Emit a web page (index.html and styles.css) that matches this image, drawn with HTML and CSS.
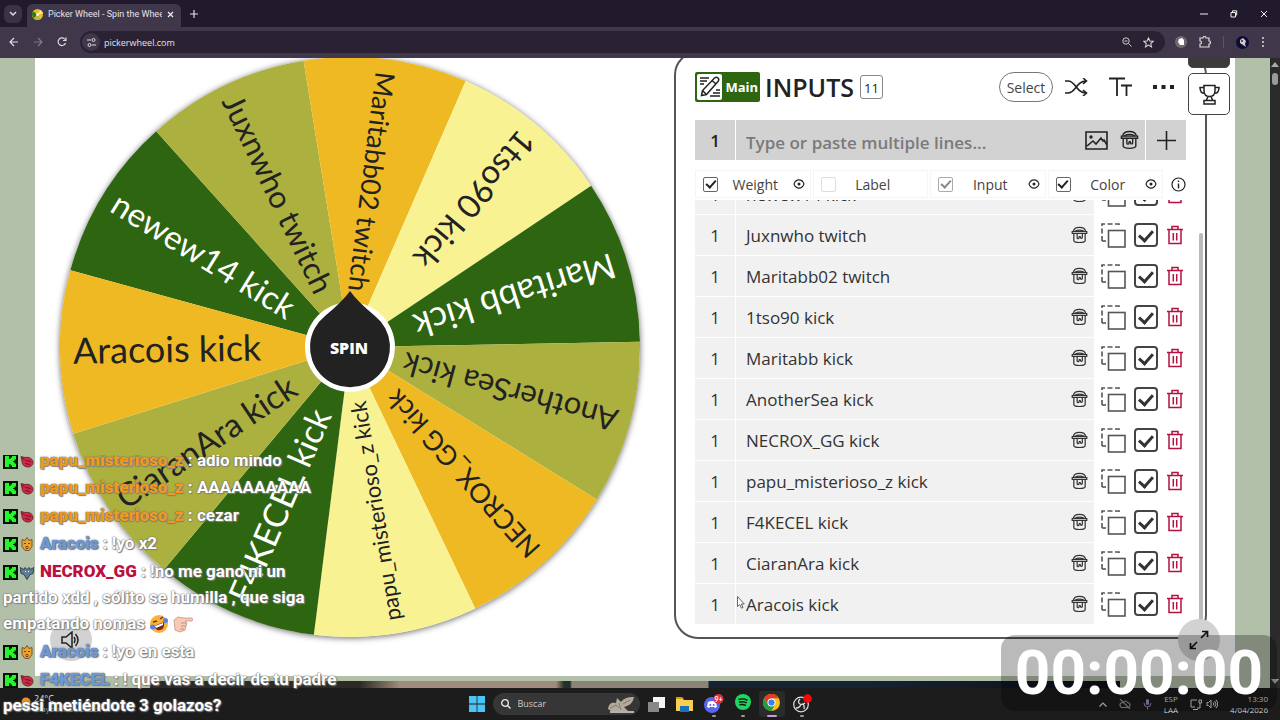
FILE: index.html
```
<!DOCTYPE html>
<html lang="es">
<head>
<meta charset="utf-8">
<title>Picker Wheel - Spin the Wheel</title>
<link rel="stylesheet" href="styles.css">
</head>
<body>
<svg class="defs" aria-hidden="true">
  <symbol id="bucket" viewBox="0 0 18 19">
    <g fill="none" stroke="currentColor" stroke-width="1.3">
      <path d="M2.500 5.500C3.500 0 14.500 0 15.500 5.500"/>
      <path d="M4 5.500q5-2.500 10 0"/>
      <path d="M1.300 5.800h15.400v2H1.300z"/>
      <path d="M3 8v7.500c1 2.600 11 2.600 12 0V8"/>
      <path d="M6.500 8v4.500c0 1.300 2 1.300 2 0v-1M8.500 12c0-1.500 1.500-1.500 1.500 0 0 1.500 2 1.500 2 0V8"/>
    </g>
  </symbol>
  <symbol id="copy" viewBox="0 0 25 25">
    <g fill="none" stroke="#555" stroke-width="1.6">
      <rect x="7.500" y="7.500" width="16.500" height="16.500"/>
      <path d="M1 18V1h17v3" stroke-dasharray="5 2.500"/>
      <path d="M1 18h4"/>
    </g>
  </symbol>
  <symbol id="trash" viewBox="0 0 18 20">
    <g fill="none" stroke="#b3123f" stroke-width="1.500">
      <path d="M1 4.500h16M6 4V1.500h6V4M3 5v13.500h12V5M7.300 8v7.500M10.700 8v7.500"/>
    </g>
  </symbol>
  <symbol id="eye" viewBox="0 0 12 10">
    <path d="M1 5c2-5.500 8-5.500 10 0c-2 5.500-8 5.500-10 0z" fill="none" stroke="#222" stroke-width="1.100"/>
    <circle cx="6" cy="5" r="1.500" fill="#222"/>
  </symbol>
  <symbol id="kick" viewBox="0 0 15 15">
    <rect width="15" height="15" fill="#001800"/>
    <path d="M2 2h4v3h1.500V3.500H9V2h4v3.500h-1.500V7H10v1h1.500v1.500H13V13H9v-1.500H7.500V10H6v3H2z" fill="#25f52a"/>
  </symbol>
  <symbol id="berry" viewBox="0 0 14 14">
    <path d="M1 2l4 1c5-1 8 2 8 5s-3 5-6 4.500S2 10 2 7z" fill="#cf2946" stroke="#542029" stroke-width=".8"/>
    <path d="M6 6l5 1M5 9l5 1M2 3l3 3" stroke="#6f1026" fill="none"/>
  </symbol>
  <symbol id="lion" viewBox="0 0 14 14">
    <path d="M2 2l3 1 2-3 2 3 3-1v7l-3 4H5L2 9z" fill="#e8a42e" stroke="#7b5523"/>
    <path d="M4 6h2M8 6h2M6 9h2v2H6z" stroke="#76401d" fill="#fff0b0"/>
  </symbol>
  <symbol id="bat" viewBox="0 0 14 14">
    <path d="M0 2l4 2 1-2 2 2 2-2 1 2 4-2-1 6-3 1-3 5-3-5-3-1z" fill="#5c7f96" stroke="#2f4450"/>
    <path d="M5 6h1M8 6h1" stroke="#fff"/>
  </symbol>
</svg>

<div class="screen">
<header class="browser">
  <div class="tabs">
    <button class="tab-list" aria-label="Buscar pestañas"><svg width="8" height="6" viewBox="0 0 8 6"><path d="M1 1l3 3 3-3" fill="none" stroke="#ddd" stroke-width="1.500"/></svg></button>
    <div class="tab">
      <svg width="11" height="11" viewBox="0 0 12 12"><circle cx="6" cy="6" r="6" fill="#edbb29"/><path d="M6 6L1 2.500A6 6 0 0 0 2 10z" fill="#2f7a1a"/><path d="M6 6L3 11a6 6 0 0 0 6-.5z" fill="#a9c03c"/><path d="M6 6L12 5a6 6 0 0 0-3-4z" fill="#f8f08a"/><circle cx="6" cy="6" r="1.500" fill="#fff"/></svg>
      <span class="tab-title">Picker Wheel - Spin the Wheel</span>
      <button class="plain" aria-label="Cerrar pestaña"><svg width="7" height="7" viewBox="0 0 7 7"><path d="M1 1l5 5M6 1L1 6" stroke="#eee" stroke-width="1.200"/></svg></button>
    </div>
    <button class="plain new-tab" aria-label="Nueva pestaña"><svg width="8" height="8" viewBox="0 0 8 8"><path d="M4 0v8M0 4h8" stroke="#ddd" stroke-width="1.200"/></svg></button>
    <div class="window-buttons">
      <button class="plain" aria-label="Minimizar"><svg width="8" height="8" viewBox="0 0 8 8"><path d="M0 4h8" stroke="#eee"/></svg></button>
      <button class="plain" aria-label="Restaurar"><svg width="8" height="8" viewBox="0 0 8 8"><path d="M1 2.500h4.500v4.500H1zM2.500 2V.8h4.200V5H6" fill="none" stroke="#eee"/></svg></button>
      <button class="plain" aria-label="Cerrar"><svg width="8" height="8" viewBox="0 0 8 8"><path d="M1 1l6 6M7 1L1 7" stroke="#eee"/></svg></button>
    </div>
  </div>
  <div class="toolbar">
    <button class="plain" aria-label="Atrás"><svg width="10" height="10" viewBox="0 0 10 10"><path d="M9 5H1M5 1L1 5l4 4" fill="none" stroke="#ddd" stroke-width="1.200"/></svg></button>
    <button class="plain" aria-label="Adelante"><svg width="10" height="10" viewBox="0 0 10 10"><path d="M1 5h8M5 1l4 4-4 4" fill="none" stroke="#81798b" stroke-width="1.200"/></svg></button>
    <button class="plain" aria-label="Recargar"><svg width="10" height="10" viewBox="0 0 10 10"><path d="M8.500 6A3.800 3.800 0 1 1 8 2.500M9 .5v3H6" fill="none" stroke="#ddd" stroke-width="1.200"/></svg></button>
    <div class="address">
      <span class="site-info"><svg width="9" height="9" viewBox="0 0 9 9"><g fill="none" stroke="#ddd"><path d="M0 2h4M5 7h4"/><circle cx="6.500" cy="2" r="1.500"/><circle cx="2.500" cy="7" r="1.500"/></g></svg></span>
      <input class="url" type="text" value="pickerwheel.com" aria-label="Dirección">
      <button class="plain" aria-label="Zoom"><svg width="10" height="10" viewBox="0 0 10 10"><path d="M6.500 6.500L9.500 9.500M2.500 4h3" stroke="#ccc"/><circle cx="4" cy="4" r="3.200" fill="none" stroke="#ccc"/></svg></button>
      <button class="plain" aria-label="Favorito"><svg width="11" height="11" viewBox="0 0 12 12"><path d="M6 1l1.500 3.400 3.700.3-2.800 2.400.9 3.700L6 8.900l-3.300 1.900.9-3.700L.8 4.700l3.700-.3z" fill="none" stroke="#ddd" stroke-width="1.100"/></svg></button>
    </div>
    <div class="extensions">
      <svg width="12" height="12" viewBox="0 0 12 12"><circle cx="6" cy="6" r="6" fill="#706a70"/><path d="M4 3l3-1 2 2v5H5L3 6z" fill="#fff"/></svg>
      <svg width="12" height="12" viewBox="0 0 12 12"><path d="M1 2h3a1.500 1.500 0 0 1 3 0h3v3a1.500 1.500 0 0 1 0 3v3H1V8a1.500 1.500 0 0 0 0-3z" fill="none" stroke="#ddd" stroke-width="1.200"/></svg>
      <span class="bar"></span>
      <svg width="13" height="13" viewBox="0 0 13 13"><circle cx="6.500" cy="6.500" r="6.500" fill="#0d0b38"/><path d="M4 4l3-2 3 3-1 3 1 3-3-2-3-2z" fill="#d8c8c8"/><circle cx="6" cy="5" r="1" fill="#333"/></svg>
      <svg width="4" height="12" viewBox="0 0 4 12" fill="#ddd"><circle cx="2" cy="2" r="1"/><circle cx="2" cy="6" r="1"/><circle cx="2" cy="10" r="1"/></svg>
    </div>
  </div>
</header>

<div class="viewport">
  <div class="page">
    <main class="sheet">
      <section class="wheel-area" aria-label="Ruleta">
        <svg class="wheel" id="wheel" viewBox="-315 -289 639 618">
          <circle class="rim" r="290"/>
          <g id="slices"></g>
          <circle r="45" fill="#fff"/>
          <path d="M0-56Q7-46 25-31A40 40 0 1 1-25-31Q-7-46 0-56Z" fill="#222"/>
          <text class="spin" x="-1" y="7" text-anchor="middle">SPIN</text>
        </svg>
        <button class="round sound" aria-label="Sonido"><svg width="20" height="18" viewBox="0 0 20 18"><path d="M1 6h4l6-5v16l-6-5H1zM13 6q2 3 0 6M14.500 3q5 6 0 12" fill="none" stroke="#222" stroke-width="1.500"/></svg></button>
      </section>

      <section class="panel">
        <div class="panel-head">
          <span class="main-badge"><span class="main-icon"><svg width="22" height="22" viewBox="0 0 22 22"><g fill="none" stroke="#222" stroke-width="1.500"><path d="M2.500 19.500l1-5L15.500 2q2-1.500 3.500 0t0 3.500L7.500 18.500zM13 4.500l4 3.500M3.500 14.500l4 4"/><path d="M1 2h9M1 5h7M1 8h4M17 14h4M14 17h7M11 20h10"/></g></svg></span>Main</span>
          <h1>INPUTS</h1>
          <span class="count">11</span>
          <button class="select">Select</button>
          <button class="plain" aria-label="Mezclar"><svg width="23" height="18" viewBox="0 0 23 18"><path d="M0 3h3C11 3 11 15 21 15M0 15h3C11 15 11 3 21 3M18 0l3.500 3L18 6M18 12l3.500 3-3.500 3" fill="none" stroke="#222" stroke-width="1.600"/></svg></button>
          <button class="plain" aria-label="Tamaño de texto"><svg width="23" height="20" viewBox="0 0 23 20"><path d="M0 1.500h16M8 1.500V19M12 8.500h11M17.500 8.500V19" fill="none" stroke="#222" stroke-width="1.800"/></svg></button>
          <button class="plain" aria-label="Más"><svg width="21" height="4" viewBox="0 0 21 4" fill="#222"><path d="M0 0h4v4H0zM8.500 0h4v4h-4zM17 0h4v4h-4z"/></svg></button>
        </div>

        <form class="add-row">
          <span class="add-weight">1</span>
          <label class="add-field">
            <input type="text" placeholder="Type or paste multiple lines..." aria-label="Nueva entrada">
            <svg width="23" height="19" viewBox="0 0 23 19"><g fill="none" stroke="#222" stroke-width="1.600"><path d="M1 1h21v17H1zM2 15l6-5 3 3 5-6 2 3 1-1 3 5"/></g><circle cx="6" cy="6" r="1.700" fill="#222"/></svg>
            <svg width="19" height="20"><use href="#bucket"/></svg>
          </label>
          <button class="add" type="button" aria-label="Agregar"><svg width="19" height="19" viewBox="0 0 19 19"><path d="M9.500 0v19M0 9.500h19" stroke="#222" stroke-width="1.600"/></svg></button>
        </form>

        <div class="columns">
          <label class="col"><input type="checkbox" checked><span>Weight</span><svg width="12" height="10"><use href="#eye"/></svg></label>
          <label class="col faint"><input type="checkbox"><span>Label</span><i></i></label>
          <label class="col pale"><input type="checkbox" checked><span>Input</span><svg width="12" height="10"><use href="#eye"/></svg></label>
          <label class="col"><input type="checkbox" checked><span>Color</span><svg width="12" height="10"><use href="#eye"/></svg></label>
          <svg class="info" width="15" height="15" viewBox="0 0 15 15"><circle cx="7.500" cy="7.500" r="6.500" fill="none" stroke="#222" stroke-width="1.200"/><path d="M7.500 6.500v5M7.500 3.500v1.500" stroke="#222" stroke-width="1.400"/></svg>
        </div>

        <div class="list-wrap">
          <ul class="list" id="entries"></ul>
          <span class="list-scroll"></span>
        </div>
      </section>

      <div class="side-tools">
        <button class="tool dark" aria-label="Entradas"></button>
        <button class="tool" aria-label="Resultados"><svg width="21" height="21" viewBox="0 0 21 21"><path d="M5 1.500h11v5c0 4-2 6-5.500 6S5 10.500 5 6.500zM5 3.500H1c0 4 2 6 5 6M16 3.500h4c0 4-2 6-5 6M9 12.500l-2 4.500M12 12.500l2 4.500M5 16.500h11v3.500H5z" fill="none" stroke="#222" stroke-width="1.500"/></svg></button>
      </div>
      <button class="round expand" aria-label="Pantalla completa"><svg width="20" height="20" viewBox="0 0 20 20"><path d="M12 8l6-6M13 1.500h5.500V7M8 12l-6 6M1.500 13v5.500H7" fill="none" stroke="#111" stroke-width="1.700"/></svg></button>
      <svg class="pointer" width="8" height="13" viewBox="0 0 8 13"><path d="M.5.5v10l2.300-2 1.700 3.700 1.500-.7-1.700-3.500h3z" fill="#fff" stroke="#444" stroke-width=".8"/></svg>
    </main>
    <div class="advert"></div>
  </div>
  <div class="scrollbar"><svg width="8" height="6" viewBox="0 0 8 6"><path d="M4 0l4 5H0z" fill="#aaa"/></svg><span class="thumb"></span><svg class="down" width="8" height="6" viewBox="0 0 8 6"><path d="M4 6L0 1h8z" fill="#aaa"/></svg></div>
</div>

<footer class="taskbar">
  <div class="weather">
    <svg width="16" height="14" viewBox="0 0 16 14"><circle cx="10" cy="5" r="4.500" fill="#e8932f"/><rect x="0" y="7" width="14" height="6" rx="3" fill="#a8b8c8"/></svg>
    <span>24°C<br><small>Mayorm. soleado</small></span>
  </div>
  <div class="apps">
    <svg width="16" height="16" viewBox="0 0 16 16" fill="#4cc4f5"><path d="M0 0h7.600v7.600H0zM8.400 0H16v7.600H8.400zM0 8.400h7.600V16H0zM8.400 8.400H16V16H8.400z"/></svg>
    <label class="search">
      <svg width="10" height="10" viewBox="0 0 10 10"><path d="M6.500 6.500l3 3" stroke="#eee" stroke-width="1.300"/><circle cx="4" cy="4" r="3.300" fill="none" stroke="#eee" stroke-width="1.300"/></svg>
      <input type="text" placeholder="Buscar" aria-label="Buscar">
      <svg width="28" height="17" viewBox="0 0 28 17"><path d="M1 13C2 7 5 6 9 7L10 2l4 4c3-4 7-5 13-5-1 6-5 9-10 10l4 4H4z" fill="#b3aa9b"/><path d="M3 12l6-3 3 3M16 8l7-4M12 7l2 7" stroke="#82796c" fill="none"/><path d="M3 16h24" stroke="#ddd" stroke-width="1.500"/></svg>
    </label>
    <svg width="17" height="15" viewBox="0 0 17 15"><path d="M5 0h12v11H5z" fill="#f4f4f4"/><path d="M0 5h11v10H0z" fill="#888"/></svg>
    <svg width="17" height="15" viewBox="0 0 17 15"><path d="M0 1h6l2 2h9v11H0z" fill="#f7cf52"/><path d="M0 0h6l2 2H0z" fill="#d99720"/><path d="M4 9h9v6H4z" fill="#1672bb"/></svg>
    <span class="app"><svg width="20" height="20" viewBox="0 0 20 20"><circle cx="8" cy="11" r="8" fill="#5865f2"/><path d="M4 8q4-2 8 0l1 5-2 1-1-1H6l-1 1-2-1z" fill="#fff"/><circle cx="6.300" cy="11" r="1" fill="#5865f2"/><circle cx="9.700" cy="11" r="1" fill="#5865f2"/><circle cx="14.500" cy="5" r="5" fill="#d9333f"/><text x="14.500" y="8" text-anchor="middle" class="badge-text">9+</text></svg></span>
    <span class="app"><svg width="16" height="16" viewBox="0 0 16 16"><circle cx="8" cy="8" r="8" fill="#1ed760"/><path d="M3.500 5.500q5-1.500 9 .8M4 8.200q4.500-1.200 7.800.8M4.500 10.700q3.500-.8 6.500.8" fill="none" stroke="#111" stroke-width="1.400"/></svg></span>
    <span class="app active"><svg width="17" height="17" viewBox="0 0 17 17"><circle cx="8.500" cy="8.500" r="8.500" fill="#fbc116"/><path d="M1.100 4.300A8.500 8.500 0 0 1 15.900 4.300H8.500L5 10.500z" fill="#e33b2e"/><path d="M1.100 4.300A8.500 8.500 0 0 0 8.500 17L12 10.500 5 10.500z" fill="#229a4c"/><circle cx="8.500" cy="8.500" r="4" fill="#fff"/><circle cx="8.500" cy="8.500" r="3.100" fill="#3d7ff0"/></svg></span>
    <span class="app"><svg width="19" height="19" viewBox="0 0 19 19"><circle cx="8" cy="10.500" r="7.300" fill="#222" stroke="#ddd" stroke-width="1.200"/><path d="M7 5q-3 3 0 5q3 1 5-1M8 10q-1 4-5 4M9 10q3 1 2 5" fill="none" stroke="#ddd" stroke-width="1.300"/><circle cx="14.500" cy="4.500" r="4.300" fill="#f00a0a"/></svg></span>
  </div>
  <div class="tray">
    <svg width="8" height="5" viewBox="0 0 8 5"><path d="M.5 4.500L4 1l3.500 3.500" fill="none" stroke="#ddd" stroke-width="1.200"/></svg>
    <svg width="12" height="10" viewBox="0 0 12 10"><path d="M3 8.500h6q2.500-.5 2-3-.5-2-2.500-2-2-3-4.500 0Q.5 4 1 6.500q.5 2 2 2M1 0l10 10" fill="none" stroke="#999" stroke-width="1.100"/></svg>
    <svg width="9" height="12" viewBox="0 0 9 12"><rect x="3" y="1" width="3" height="6" rx="1.500" fill="#a58ac0"/><path d="M1 5q0 4 3.500 4T8 5M4.500 9v2.500" fill="none" stroke="#a58ac0"/></svg>
    <span class="lang">ESP<br>LAA</span>
    <span class="status">
      <svg width="12" height="11" viewBox="0 0 12 11"><path d="M7 1H1v7h4M3 10.500h5M9 1h2.500v3H9zM10 4v5H7" fill="none" stroke="#ddd"/></svg>
      <svg width="12" height="10" viewBox="0 0 12 10"><path d="M1 3.500h1.500L5 1v8L2.500 6.500H1zM7 3.500q1.500 1.500 0 3M8.500 2q3 3 0 6M10 .8q3.500 4.200 0 8.400" fill="none" stroke="#ddd"/></svg>
    </span>
    <span class="clock">13:30<br>4/04/2026</span>
  </div>
</footer>

<aside class="chat" aria-label="Chat">
  <p><svg><use href="#kick"/></svg><svg><use href="#berry"/></svg><b class="orange">papu_misterioso_z</b> : adio mindo</p>
  <p><svg><use href="#kick"/></svg><svg><use href="#berry"/></svg><b class="orange">papu_misterioso_z</b> : AAAAAAAAAA</p>
  <p><svg><use href="#kick"/></svg><svg><use href="#berry"/></svg><b class="orange">papu_misterioso_z</b> : cezar</p>
  <p><svg><use href="#kick"/></svg><svg><use href="#lion"/></svg><b class="blue">Aracois</b> : !yo x2</p>
  <p><svg><use href="#kick"/></svg><svg><use href="#bat"/></svg><b class="red">NECROX_GG</b> : !no me gano ni un partido xdd , sólito se humilla , que siga empatando nomas
    <svg class="emoji" viewBox="0 0 20 20"><circle cx="10" cy="10" r="9" fill="#f9b233"/><path d="M5 12l10-4q1 7-4 8-4 1-6-4z" fill="#7c2434"/><path d="M6 12l8-3v2l-7 3z" fill="#fff"/><path d="M4 8l4-1M11 5l3-2" stroke="#633" stroke-width="1.500"/><circle cx="3.500" cy="13" r="2.500" fill="#5d7ee8"/><circle cx="16.500" cy="6.500" r="2.500" fill="#5d7ee8"/></svg>
    <svg class="emoji" viewBox="0 0 20 20"><path d="M1 6l4-3 6 1h8q1.500 1.500 0 3h-7l2 2-1 3-1 4-5 2-5-2z" fill="#f5cbb8" stroke="#c98f7c" stroke-width=".8"/><path d="M8 9h5M8 12h5M7 15h4" stroke="#c98f7c"/></svg></p>
  <p><svg><use href="#kick"/></svg><svg><use href="#lion"/></svg><b class="blue">Aracois</b> : !yo en esta</p>
  <p><svg><use href="#kick"/></svg><svg><use href="#berry"/></svg><b class="blue">F4KECEL</b> : ! que vas a decir de tu padre pessi metiéndote 3 golazos?</p>
</aside>
<div class="timer" role="timer">00:00:00</div>
</div>
<script src="app.js"></script>
</body>
</html>
```
FILE: styles.css
```
* { box-sizing: border-box; }
body { margin: 0; font-family: "Open Sans", "Noto Sans", sans-serif; color: #222; }
button, input { font: inherit; color: inherit; }
svg { display: block; flex: none; }
.defs { position: absolute; width: 0; height: 0; }
.screen { position: relative; height: 100vh; display: flex; flex-direction: column; overflow: hidden; }
.plain { border: 0; padding: 0; background: none; display: flex; align-items: center; justify-content: center; }

.browser { background: #211a2d; color: #e6e1ea; font-size: 10px; flex: none; }
.tabs { height: 27px; display: flex; align-items: center; padding: 0 12px 0 4px; }
.tab-list { width: 18px; height: 18px; border: 0; border-radius: 6px; background: #3a3346; padding: 0; display: flex; align-items: center; justify-content: center; }
.tab { align-self: flex-end; height: 23px; width: 154px; margin-left: 5px; padding: 0 7px 3px 5px; background: #40374b; border-radius: 6px 6px 0 0; display: flex; align-items: center; gap: 5px; }
.tab-title { flex: 1; white-space: nowrap; overflow: hidden; font-family: Roboto, sans-serif; font-size: 9px; }
.new-tab { margin-left: 9px; }
.window-buttons { margin-left: auto; display: flex; gap: 22px; }
.toolbar { height: 31px; background: #40374b; display: flex; align-items: center; gap: 14px; padding: 0 15px 1px 9px; }
.address { flex: 1; height: 22px; margin: 0 -1px; border-radius: 11px; background: #2a2233; display: flex; align-items: center; gap: 11px; padding: 0 11px 0 2px; }
.site-info { width: 18px; height: 18px; border-radius: 9px; background: #40374b; display: flex; align-items: center; justify-content: center; }
.url { flex: 1; min-width: 0; border: 0; padding: 0; margin-left: -7px; background: none; font-size: 9px; outline: 0; }
.extensions { display: flex; align-items: center; gap: 12px; margin-left: -3px; }
.bar { width: 1px; height: 12px; background: #5c5468; }

.viewport { flex: 1; min-height: 0; display: flex; }
.page { flex: 1; min-width: 0; background: #b2bfa9; display: flex; flex-direction: column; }
.sheet { position: relative; flex: 1; min-height: 0; margin: 0 35px; background: #fff; display: flex; align-items: flex-start; overflow: hidden; }
.advert { height: 7px; margin: 5px 150px 0; background: linear-gradient(90deg, #2d2a26 0 210px, #a18c7b 250px 406px, #26302a 414px 420px, #8b8477 422px 558px, #172332 559px 706px, #0c1017); flex: none; }
.scrollbar { width: 10px; background: #2b2b2b; display: flex; flex-direction: column; align-items: center; padding: 4px 0; gap: 5px; }
.thumb { width: 6px; height: 12px; border-radius: 3px; background: #9a9a9a; }
.down { margin-top: auto; }

.wheel-area { position: relative; flex: 1 1 639px; min-width: 0; }
.wheel { width: 100%; height: auto; }
.rim { fill: #fff; filter: drop-shadow(0 1px 3px rgba(0, 0, 0, .6)); }
.wheel text { font-family: Lato, sans-serif; }
.wheel .spin { font-family: "Open Sans", sans-serif; font-weight: 800; font-size: 16px; fill: #fff; }
.round { position: absolute; width: 42px; height: 42px; border: 0; border-radius: 50%; background: #d2d2d2; display: flex; align-items: center; justify-content: center; padding: 0; }
.sound { left: 15px; top: 561px; }
.expand { right: 15px; top: 561px; }
.pointer { position: absolute; right: 490px; top: 538px; }

.panel { flex: 0 1 533px; min-width: 0; margin: -7px 28px 0 0; border: 2px solid #555; border-radius: 24px; padding: 19px 2px 13px 19px; }
.panel-head { height: 30px; margin: 0 29px 18px 0; display: flex; align-items: center; }
.panel-head .plain { margin-left: 21px; }
.panel-head .select + .plain { margin-left: 12px; }
.main-badge { height: 30px; width: 65px; background: #2e6510; border-radius: 2px; padding: 2px; display: flex; align-items: center; gap: 3px; color: #fff; font-weight: 700; font-size: 13px; }
.main-icon { width: 27px; height: 26px; background: #fff; border-radius: 2px; display: flex; align-items: center; justify-content: center; }
h1 { margin: 0 6px 0 5px; font-size: 25px; line-height: 30px; font-weight: 600; }
.count { width: 23px; height: 24px; border: 1px solid #888; border-radius: 3px; font-size: 13px; line-height: 24px; text-align: center; }
.select { margin-left: auto; width: 54px; height: 30px; border: 1px solid #777; border-radius: 15px; background: #fff; padding: 0; font-size: 14px; color: #444; }
.add-row { height: 40px; margin: 0 17px 10px 0; display: flex; gap: 1px; }
.add-row > * { background: #d2d2d2; }
.add-weight { width: 40px; line-height: 42px; text-align: center; font-size: 17px; font-weight: 600; }
.add-field { flex: 1; min-width: 0; display: flex; align-items: center; gap: 12px; padding: 0 6px 0 10px; }
.add-field input { flex: 1; min-width: 0; border: 0; padding: 4px 0 0; background: none; font-size: 17px; font-weight: 600; outline: 0; }
.add-field input::placeholder { color: #7a7a7a; opacity: 1; }
.add { width: 40px; border: 0; padding: 0; display: flex; align-items: center; justify-content: center; }

.columns { height: 28px; margin: 0 17px 2px 0; display: flex; align-items: center; gap: 2px; }
.col { flex: 1; height: 28px; border: 1px solid #f5f5f5; display: flex; align-items: center; padding: 0 5px 0 7px; font-size: 14px; color: #444; }
.col span { flex: 1; text-align: center; }
.col i { width: 12px; }
.info { margin-left: 6px; }
input[type="checkbox"] { appearance: none; margin: 0; flex: none; width: 15px; height: 15px; border: 1px solid #666; border-radius: 2px; background: #fff; display: grid; place-items: center; }
input[type="checkbox"]:checked::before { content: ""; width: 8px; height: 4px; margin-top: -2px; border: solid #222; border-width: 0 0 2px 2px; transform: rotate(-48deg); }
.faint input[type="checkbox"] { border-color: #ddd; }
.pale input[type="checkbox"] { border-color: #aaa; }
.pale input[type="checkbox"]:checked::before { border-color: #888; }

.list-wrap { display: flex; justify-content: space-between; }
.list { flex: 1; height: 424px; margin: 0; padding: 0; list-style: none; overflow: hidden; display: flex; flex-direction: column; justify-content: flex-end; gap: 1px; }
.row { flex: none; height: 40px; display: flex; align-items: center; font-size: 17px; line-height: 41px; color: #333; }
.weight { width: 40px; height: 40px; margin-right: 1px; background: #f1f1f1; text-align: center; }
.name { flex: 1; height: 40px; background: #f1f1f1; padding: 0 6px 0 10px; display: flex; align-items: center; justify-content: space-between; }
.row > svg { margin-left: 7px; }
.row input[type="checkbox"] { width: 24px; height: 24px; margin: 0 0 0 8px; border: 2px solid #444; border-radius: 4px; }
.row input[type="checkbox"]:checked::before { width: 11px; height: 6px; border-width: 0 0 3px 3px; border-color: #333; }
.row > .remove { margin: 0 15px 0 8px; }
.list-scroll { width: 4px; margin-top: 33px; background: #bbb; border-radius: 2px; }

.side-tools { position: absolute; right: 5px; top: -32px; display: grid; gap: 5px; }
.tool { width: 42px; height: 42px; border: 1px solid #444; border-radius: 5px; background: #fff; display: flex; align-items: center; justify-content: center; padding: 0; }
.dark { background: #3b3b3b; }

.taskbar { height: 32px; flex: none; background: #1c1c1c; color: #ddd; display: grid; grid-template-columns: 1fr auto 1fr; align-items: center; font-size: 9px; line-height: 14px; }
.weather { display: flex; align-items: center; gap: 2px; padding-left: 16px; line-height: 10px; font-size: 9px; }
.weather small { font-size: 8px; color: #999; }
.apps { display: flex; align-items: center; gap: 11px; }
.search { width: 147px; height: 22px; margin: 0 -3px; border-radius: 11px; background: #363636; display: flex; align-items: center; gap: 7px; padding: 0 5px 0 8px; font-size: 9px; }
.search input { flex: 1; min-width: 0; border: 0; padding: 0; background: none; outline: 0; }
.search input::placeholder { color: #ccc; opacity: 1; }
.app { height: 26px; display: flex; flex-direction: column; align-items: center; justify-content: space-between; padding-top: 3px; }
.app::after { content: ""; width: 4px; height: 2px; border-radius: 1px; background: #999; }
.active { width: 26px; margin: 0 -3px; background: #2b2b2b; border-radius: 3px; }
.active::after { width: 10px; background: #c99ad8; }
.badge-text { font: 700 7px Lato, sans-serif; fill: #fff; }
.tray { justify-self: end; display: flex; align-items: center; gap: 12px; padding-right: 12px; font-size: 8px; line-height: 11px; }
.lang { text-align: center; }
.status { display: flex; align-items: center; gap: 4px; }
.clock { text-align: right; }

.chat { position: absolute; left: 0; bottom: 2px; width: 345px; height: 263px; padding: 0 3px; overflow: hidden; display: flex; flex-direction: column; justify-content: flex-end; gap: 2px; font-family: Roboto, sans-serif; font-weight: 700; font-size: 17px; line-height: 26px; color: #fff; text-shadow: 0 0 1px #666, 0 0 2px #777, 1px 1px 1px #888; }
.chat p { margin: 0; flex: none; }
.chat p:first-child { margin-bottom: -1px; }
.chat p svg { display: inline-block; width: 15px; height: 15px; margin-right: 2px; vertical-align: -3px; }
.chat p svg + svg { width: 14px; margin-right: 6px; }
.chat p .emoji, .chat p .emoji + .emoji { width: 20px; height: 20px; margin: 0; vertical-align: -5px; }
.orange { color: #f09a1c; }
.blue { color: #6c9ad8; }
.red { color: #bb0f3d; text-shadow: 0 0 1px #fff; }
.timer { position: absolute; right: 3px; bottom: 9px; width: 276px; height: 76px; border-radius: 14px; background: rgba(0, 0, 0, .27); color: #fff; font: 700 62px/76px Roboto, sans-serif; text-align: center; }
```
FILE: app.js
```
const entries = [
  { name: "newew14 kick", color: "#2e6510", ink: "#fff", size: 33 },
  { name: "Juxnwho twitch", color: "#acb03e", ink: "#222", size: 31 },
  { name: "Maritabb02 twitch", color: "#efb924", ink: "#222", size: 27 },
  { name: "1tso90 kick", color: "#f9f293", ink: "#222", size: 33 },
  { name: "Maritabb kick", color: "#2e6510", ink: "#fff", size: 35 },
  { name: "AnotherSea kick", color: "#acb03e", ink: "#222", size: 31 },
  { name: "NECROX_GG kick", color: "#efb924", ink: "#222", size: 27 },
  { name: "papu_misterioso_z kick", color: "#f9f293", ink: "#222", size: 22 },
  { name: "F4KECEL kick", color: "#2e6510", ink: "#fff", size: 34 },
  { name: "CiaranAra kick", color: "#acb03e", ink: "#222", size: 33 },
  { name: "Aracois kick", color: "#efb924", ink: "#222", size: 36 }
];

const radius = 290;
const step = 360 / entries.length;
const firstMiddle = 211.7;
const point = (deg) => {
  const a = deg * Math.PI / 180;
  return `${(radius * Math.cos(a)).toFixed(2)} ${(radius * Math.sin(a)).toFixed(2)}`;
};

document.getElementById("slices").innerHTML = entries.map((e, i) => {
  const mid = firstMiddle + i * step;
  return `<path d="M0 0L${point(mid - step / 2)}A${radius} ${radius} 0 0 1 ${point(mid + step / 2)}Z" fill="${e.color}"/>
    <text x="-277" y="${Math.round(e.size / 3)}" font-size="${e.size}" fill="${e.ink}" transform="rotate(${(mid - 180).toFixed(1)})">${e.name}</text>`;
}).join("");

document.getElementById("entries").innerHTML = entries.map((e) => `
  <li class="row">
    <span class="weight">1</span>
    <span class="name">${e.name}<svg width="17" height="18"><use href="#bucket"/></svg></span>
    <svg width="25" height="25"><use href="#copy"/></svg>
    <input type="checkbox" checked aria-label="${e.name}">
    <svg class="remove" width="18" height="20"><use href="#trash"/></svg>
  </li>`).join("");
```
